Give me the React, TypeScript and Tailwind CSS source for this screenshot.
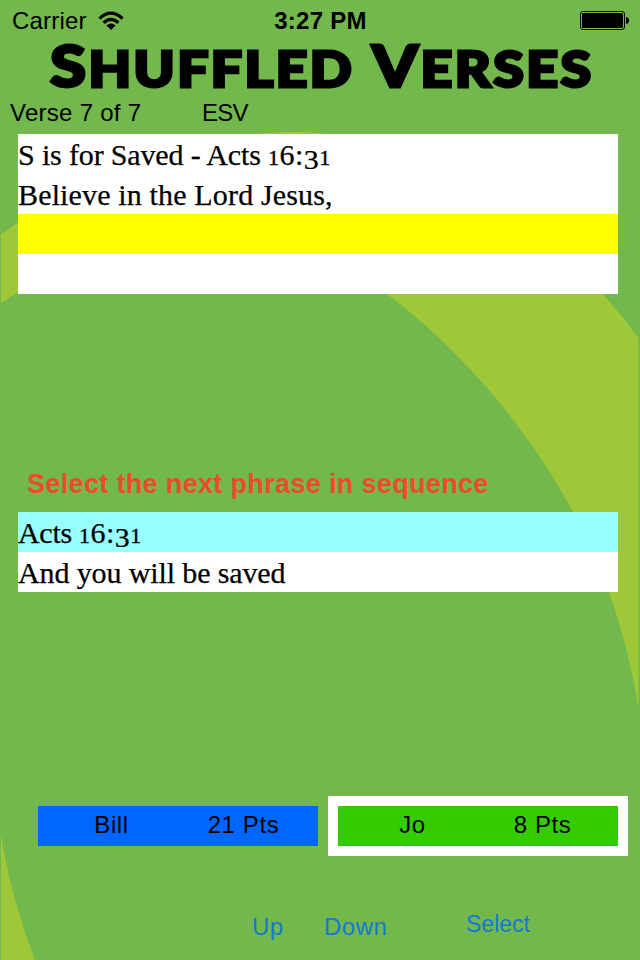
import clsx from "clsx"

const verseLines = [
  { text: "S is for Saved - Acts ", reference: true, className: "bg-white tracking-[-0.15px]" },
  { text: "Believe in the Lord Jesus,", className: "bg-white tracking-[0.15px]" },
  { text: "", className: "bg-[#ffff00]" },
  { text: "", className: "bg-white" },
]

const phrases = [
  { text: "Acts ", reference: true, className: "bg-[#99ffff] tracking-[-0.3px]" },
  { text: "And you will be saved", className: "bg-white tracking-[-0.12px]" },
]

const players = [
  { name: "Bill", points: "21 Pts", active: false, color: "bg-[#0066ff]", nameBox: "w-[147px]", pointsBox: "w-[117px]" },
  { name: "Jo", points: "8 Pts", active: true, color: "bg-[#33cc00]", nameBox: "w-[151px]", pointsBox: "w-[113px]" },
]

function Backdrop() {
  return (
    <svg className="absolute inset-0" width="640" height="960" viewBox="0 0 640 960" fill="#9fc838">
      <path d="M1 234Q145 132 295 132Q475 135 603 294Q622 315 638.500 338V708Q629 648 609 592Q595 552 573 512Q556 480 535 450Q500 399 461 360Q426 323 387 294Q300 228 205 226Q110 230 1 303Z" />
      <path d="M1 834Q10 894 35 960H1Z" />
    </svg>
  )
}

function StatusBar() {
  return (
    <div className="flex h-10 items-center justify-between pr-[11px] pl-3 text-[24px]">
      <div className="flex w-[220px] items-center gap-[11px]">
        <span className="translate-y-px tracking-[0.2px]">Carrier</span>
        <svg className="translate-y-px" width="26" height="20" viewBox="0 0 26 20" fill="none" stroke="#000" strokeWidth="3.2">
          <path d="M1.500 7.600Q13 -3.300 24.500 7.600" />
          <path d="M5.600 11.800Q13 5 20.400 11.800" />
          <path d="M13 19L8.400 14.400Q13 10.500 17.600 14.400Z" fill="#000" stroke="none" />
        </svg>
      </div>
      <span className="translate-y-px font-bold tracking-[0.25px]">3:27 PM</span>
      <div className="flex w-[220px] justify-end">
        <svg className="translate-y-px" width="49" height="20" viewBox="0 0 49 20">
          <rect x="0.500" y="0.500" width="44" height="18" rx="2.500" fill="none" stroke="#000" />
          <rect x="2" y="2" width="41" height="15" rx="1.500" />
          <path d="M46 6Q49 6.500 49 9.500T46 13Z" />
        </svg>
      </div>
    </div>
  )
}

// Old-style figures: the ones sit at x-height and the three drops below the baseline
function Reference() {
  return (
    <span className="tracking-[0.5px]">
      <span className="text-[22px] [-webkit-text-stroke:0.4px_#000]">1</span>
      <span>6:</span>
      <span className="inline-block origin-bottom translate-y-[3px] scale-y-90">3</span>
      <span className="text-[22px] [-webkit-text-stroke:0.4px_#000]">1</span>
    </span>
  )
}

type Line = { text: string; className: string; reference?: boolean }

function LineList({ lines }: { lines: Line[] }) {
  return (
    <ul className="mx-[18px] w-[600px] font-['Liberation_Serif',serif] text-[30px] [-webkit-text-stroke:0.25px_#000]">
      {lines.map((line, i) => (
        <li key={i} className={clsx("h-10 leading-[41px] whitespace-pre", line.className)}>
          {line.text}
          {line.reference && <Reference />}
        </li>
      ))}
    </ul>
  )
}

export default function App() {
  return (
    <div className="relative h-[960px] w-[640px] overflow-hidden bg-[#72b84d] font-['Liberation_Sans',Arial,sans-serif] text-black">
      <Backdrop />
      <div className="relative flex h-full flex-col">
        <StatusBar />

        <h1 className="flex h-[58px] items-baseline pl-[50px] font-['Lato',sans-serif] text-[49px] leading-[50px] font-black tracking-[2.2px] whitespace-nowrap [-webkit-text-stroke:3px_#000]">
          <span className="inline-block w-[322px] origin-left scale-x-[1.125]">
            <span className="text-[58px]">S</span>HUFFLED
          </span>
          <span className="inline-block origin-left scale-x-[1.13]">
            <span className="text-[58px]">V</span>ERSES
          </span>
        </h1>

        <div className="flex h-9 pl-[10px] text-[24px] leading-[29px]">
          <span className="w-[192px] tracking-[0.27px]">Verse 7 of 7</span>
          <span className="tracking-[-0.8px]">ESV</span>
        </div>

        <LineList lines={verseLines} />

        <p className="mt-[170px] h-12 pl-[27px] text-[27px] leading-[40px] font-bold tracking-[0.34px] text-[#ee4b2b]">
          Select the next phrase in sequence
        </p>

        <LineList lines={phrases} />

        {/* Scores, with a white frame around the current player */}
        <div className="mt-[204px] flex pl-[28px] text-[24px]">
          {players.map((player) => (
            <div
              key={player.name}
              className={clsx("w-[300px] border-10", player.active ? "border-white" : "border-transparent")}
            >
              <div className={clsx("flex h-10 leading-[38px] tracking-[0.6px]", player.color)}>
                <span className={clsx("text-center", player.nameBox)}>{player.name}</span>
                <span className={clsx("ml-auto text-center", player.pointsBox)}>
                  {player.points}
                </span>
                <span className={player.active ? "w-5" : "w-4"} />
              </div>
            </div>
          ))}
        </div>

        <div className="mt-[51px] flex items-start pl-[252px] text-[24px] leading-10 text-[#127ad2]">
          <button className="w-[72px] text-left tracking-[0.5px]">Up</button>
          <button className="w-[142px] text-left tracking-[0.5px]">Down</button>
          <button className="text-[23px] leading-[34px]">Select</button>
        </div>
      </div>
    </div>
  )
}
